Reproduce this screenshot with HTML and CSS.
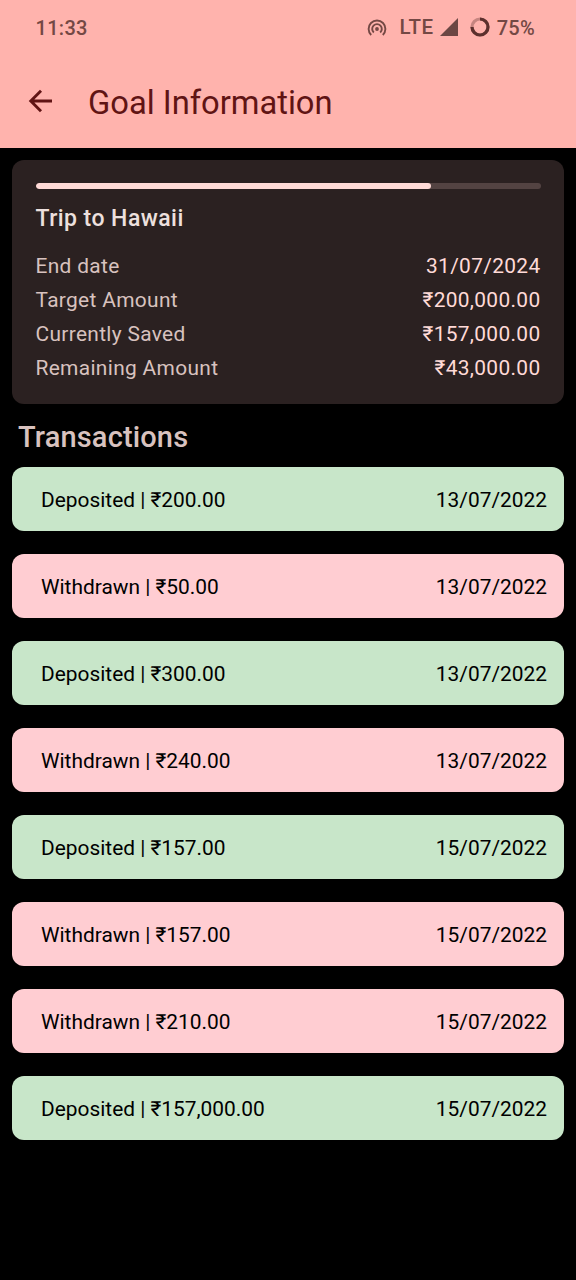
FILE: index.html
```html
<!DOCTYPE html>
<html lang="en">
<head>
<meta charset="utf-8">
<title>Goal Information</title>
<link rel="stylesheet" href="styles.css">
</head>
<body>
<header class="header">
  <div class="status">
    <span class="clock">11:33</span>
    <svg class="hotspot" width="20" height="20" viewBox="0 0 20 20" fill="none" stroke="currentColor" stroke-width="1.9"><path d="M4.2 17A8.4 8.4 0 1 1 15.8 17"/><path d="M6.8 14.5A4.8 4.8 0 1 1 13.2 14.5"/><circle cx="10" cy="11" r="1.9" fill="currentColor" stroke="none"/></svg>
    <span class="lte">LTE</span>
    <svg class="signal" width="18" height="18" viewBox="0 0 18 18"><path d="M18 0V18H0Z" fill="currentColor"/></svg>
    <svg class="battery" width="20" height="20" viewBox="0 0 20 20" fill="none" stroke="currentColor" stroke-width="3.2"><circle cx="10" cy="10" r="8" opacity=".35"/><path d="M10 2A8 8 0 1 1 2 10"/></svg>
    <span class="percent">75%</span>
  </div>
  <div class="appbar">
    <svg class="back" width="24" height="24" viewBox="0 0 24 24" fill="none" stroke="currentColor" stroke-width="2.9"><path d="M24 12H2.5M13 1.8L2.8 12L13 22.2"/></svg>
    <h1 class="title">Goal Information</h1>
  </div>
</header>
<main class="content">
  <section class="card">
    <div class="track"><div class="fill"></div></div>
    <h2 class="goal">Trip to Hawaii</h2>
    <div class="row"><span>End date</span><span class="value">31/07/2024</span></div>
    <div class="row"><span>Target Amount</span><span class="value">₹200,000.00</span></div>
    <div class="row"><span>Currently Saved</span><span class="value">₹157,000.00</span></div>
    <div class="row"><span>Remaining Amount</span><span class="value">₹43,000.00</span></div>
  </section>
  <h2 class="heading">Transactions</h2>
  <div class="list">
    <div class="item in"><span>Deposited | ₹200.00</span><span>13/07/2022</span></div>
    <div class="item out"><span>Withdrawn | ₹50.00</span><span>13/07/2022</span></div>
    <div class="item in"><span>Deposited | ₹300.00</span><span>13/07/2022</span></div>
    <div class="item out"><span>Withdrawn | ₹240.00</span><span>13/07/2022</span></div>
    <div class="item in"><span>Deposited | ₹157.00</span><span>15/07/2022</span></div>
    <div class="item out"><span>Withdrawn | ₹157.00</span><span>15/07/2022</span></div>
    <div class="item out"><span>Withdrawn | ₹210.00</span><span>15/07/2022</span></div>
    <div class="item in"><span>Deposited | ₹157,000.00</span><span>15/07/2022</span></div>
  </div>
</main>
</body>
</html>
```
FILE: styles.css
```css
* { box-sizing: border-box; }
body { margin: 0; min-height: 1280px; background: #000; font-family: Roboto, "Noto Sans", sans-serif; font-size: 20.9px; }
h1, h2 { margin: 0; }
.header { height: 148px; background: #ffb3ad; color: #601414; }
.status { height: 56px; padding: 0 41px 0 35.5px; display: flex; align-items: center; color: #744844; font-size: 20px; font-weight: 500; letter-spacing: .3px; }
.clock { flex: 1; }
.lte { margin: -2px 6px 0 12px; font-size: 20.5px; letter-spacing: .5px; }
.signal { margin-top: -2px; color: #6b4744; }
.battery { margin: -2px 7px 0 12px; color: #5c302d; }
.hotspot { margin-top: -1px; }
.appbar { height: 92px; padding: 0 28px; display: flex; align-items: center; }
.back { margin-right: 36px; margin-top: -3px; }
.title { font-size: 32.7px; font-weight: 400; line-height: 42px; padding-top: 2px; }
.content { padding: 12px; }
.card { height: 244px; padding: 23px 23.5px 23px 23.5px; border-radius: 12px; background: #2b2121; color: #d8c2bf; }
.track { height: 6px; border-radius: 3px; background: #534342; overflow: hidden; }
.fill { width: 78.3%; height: 100%; border-radius: 3px; background: #ffdad7; }
.goal { margin: 16px 0 16px; font-size: 23px; line-height: 28px; font-weight: 500; letter-spacing: .45px; color: #ede0de; }
.row { display: flex; justify-content: space-between; height: 34px; line-height: 34px; letter-spacing: .33px; }
.value { color: #ffdad7; }
.heading { height: 63px; padding-left: 6px; line-height: 67px; font-size: 29px; font-weight: 500; letter-spacing: .15px; color: #d8c2bf; }
.list { display: grid; gap: 23.5px; }
.item { display: flex; justify-content: space-between; height: 63.5px; line-height: 66px; padding: 0 17px 0 29px; border-radius: 12px; color: #000; }
.in { background: #c8e6c9; }
.out { background: #ffcdd2; }
```
